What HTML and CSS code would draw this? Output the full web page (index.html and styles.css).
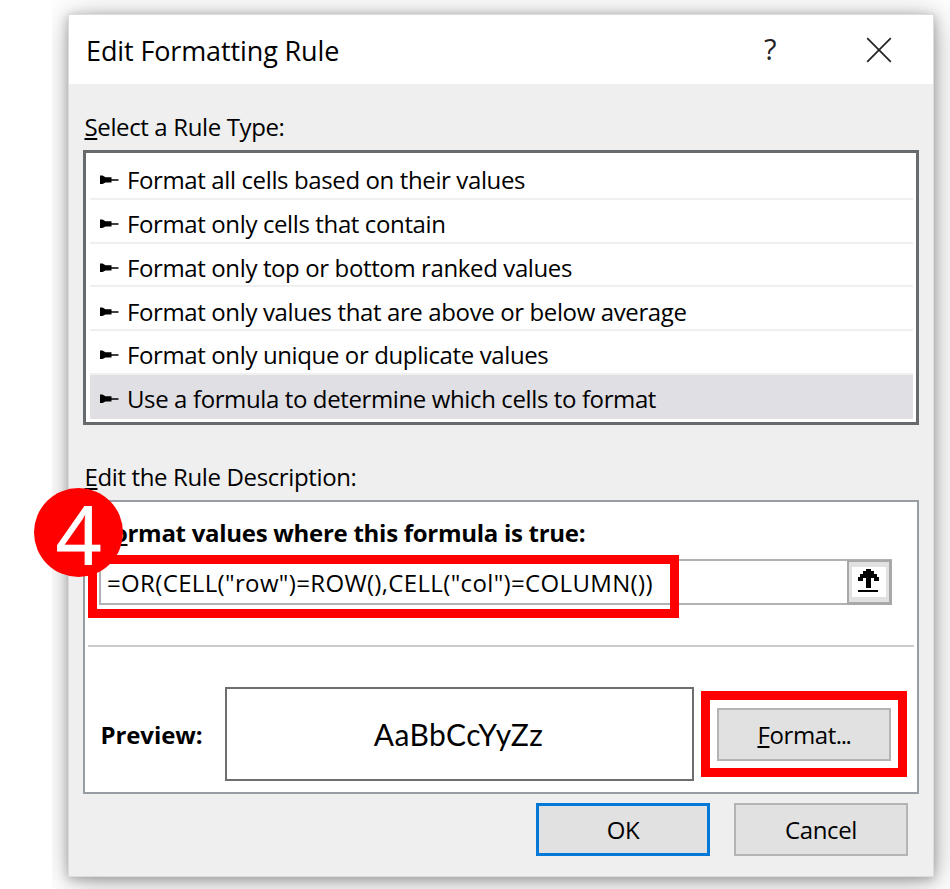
FILE: index.html
```
<!DOCTYPE html>
<html lang="en">
<head>
<meta charset="utf-8">
<title>Edit Formatting Rule</title>
<link rel="stylesheet" href="styles.css">
</head>
<body>
<svg class="defs" width="0" height="0"><symbol id="ptr" viewBox="0 0 19 10"><path d="M0 0.500h2.500L5.500 2.300h6V4.200H18.500v1.600h-7V7.400H5.500L2.500 9H0z" fill="#000"/></symbol></svg>
<div class="stage">
  <div class="dialog">
    <header class="titlebar">
      <h1 class="title"><span>Edit Formatting Rule</span></h1>
      <span class="help">?</span>
      <svg class="close" width="26" height="26" viewBox="0 0 26 26"><path d="M1.200 1.200L24.800 24.800M24.800 1.200L1.200 24.800" stroke="#222" stroke-width="1.700" fill="none"/></svg>
    </header>
    <main class="body">
      <p class="label label-type"><u>S</u>elect a Rule Type:</p>
      <ul class="rules">
        <li><svg><use href="#ptr"/></svg><span>Format all cells based on their values</span></li>
        <li><svg><use href="#ptr"/></svg><span>Format only cells that contain</span></li>
        <li><svg><use href="#ptr"/></svg><span>Format only top or bottom ranked values</span></li>
        <li><svg><use href="#ptr"/></svg><span>Format only values that are above or below average</span></li>
        <li><svg><use href="#ptr"/></svg><span>Format only unique or duplicate values</span></li>
        <li class="selected"><svg><use href="#ptr"/></svg><span>Use a formula to determine which cells to format</span></li>
      </ul>
      <p class="label label-desc"><u>E</u>dit the Rule Description:</p>
      <section class="panel">
        <h2 class="formula-title">F<u>o</u>rmat values where this formula is true:</h2>
        <div class="field">
          <span class="formula">=OR(CELL("row")=ROW(),CELL("col")=COLUMN())</span>
          <span class="collapse"><svg width="34" height="30" viewBox="0 0 34 30"><path fill="#fff" d="M0 0h34v30H0z"/><path d="M14 2h5v2h3v3h3v3h2v4h-5v-3h-3v10h-5V11h-3v3H6v-4h2V7h3V4h3zM6 23h20v2H6z" fill="#000"/></svg></span>
        </div>
        <hr>
        <div class="preview">
          <strong>Preview:</strong>
          <div class="sample"><span>AaBbCcYyZz</span></div>
          <button class="btn format"><span><u>F</u>ormat<span class="dots">...</span></span></button>
        </div>
      </section>
      <footer>
        <button class="btn ok"><span>OK</span></button>
        <button class="btn cancel"><span>Cancel</span></button>
      </footer>
    </main>
  </div>
</div>
<div class="mark mark-formula"></div>
<div class="mark mark-format"></div>
<div class="badge"><span>4</span></div>
</body>
</html>
```
FILE: styles.css
```
* { box-sizing: border-box; margin: 0; padding: 0; }
body { width: 950px; height: 889px; overflow: hidden; background: #fff; color: #000; font-family: "Open Sans", "Noto Sans", sans-serif; position: relative; }
.defs { position: absolute; }
.stage { margin-left: 52px; height: 889px; padding: 14px 16px 12px; overflow: hidden; }
.dialog { height: 863px; background: #efefef; border: 1px solid #dcdcdc; box-shadow: 0 2px 10px rgba(0,0,0,.26), 2px 4px 30px rgba(0,0,0,.3); }
.titlebar { height: 69px; background: #fff; display: flex; align-items: center; padding: 0 41px 0 17px; }
.title { flex: 1; font-size: 27px; font-weight: 400; line-height: 36px; letter-spacing: -.12px; white-space: nowrap; padding-top: 2px; }
.help { font-size: 29px; line-height: 36px; width: 14px; margin: -2px 88px 0 0; color: #222; }
.body { padding: 0 14px; }
.label { font-size: 24px; line-height: 32px; white-space: nowrap; letter-spacing: -.37px; padding-left: 1.5px; }
.label u, h2 u, .btn u { text-decoration-thickness: 2px; text-underline-offset: 2px; text-decoration-skip-ink: none; }
.label-type { margin-top: 27px; }
.rules { margin-top: 7px; height: 275px; border: 3px solid #676b6e; background: #fff; list-style: none; padding: 3px 3px 3px 4px; }
.rules li { height: 43.75px; display: flex; align-items: center; padding: 7px 0 0 10px; font-size: 24px; line-height: 32px; white-space: nowrap; letter-spacing: -.38px; border-bottom: 2px solid #f0f0f0; }
.rules li.selected { background: #e0dfe4; border-color: #e0dfe4; }
.rules svg { width: 19px; height: 10px; margin-right: 8px; }
.label-desc { margin-top: 36px; }
.panel { margin-top: 7px; height: 294px; border: 2px solid #979ca5; background: #fff; padding: 15px 3px 0; }
.formula-title { font-size: 24px; line-height: 32px; font-weight: 700; white-space: nowrap; letter-spacing: -.28px; padding-left: 12px; }
.field { margin: 10px 22px 0 11px; height: 46px; border: 2px solid #b2b2b6; display: flex; }
.formula { flex: 1; font-size: 24px; line-height: 44px; padding-left: 6px; white-space: nowrap; letter-spacing: .35px; }
.collapse { width: 45px; height: 45px; margin: -1px -2px 0 0; border: 2px solid #a8a8a8; border-right-width: 3px; border-bottom-width: 3px; background: #e1e1e1; display: flex; align-items: center; justify-content: center; }
hr { margin-top: 40px; border: 0; border-top: 2px solid #cbcbcb; }
.preview { display: flex; align-items: center; margin-top: 40px; padding-left: 12px; }
.preview strong { width: 125px; font-size: 24px; line-height: 32px; letter-spacing: -.1px; padding: 1px 0 0 .5px; }
.sample { width: 469px; height: 94px; border: 2px solid #6e6e6e; display: flex; align-items: center; justify-content: center; font-size: 30px; font-family: Lato, sans-serif; letter-spacing: .4px; padding: 0 2px 0 0; }
.btn { height: 53px; width: 174px; background: #e1e1e1; border: 2px solid #b4b4b4; font: 24px/32px "Open Sans", sans-serif; color: #000; letter-spacing: -.4px; }
.format { margin-left: 23px; padding-top: 2px; }
.dots { letter-spacing: -1.4px; }
footer { display: flex; justify-content: flex-end; gap: 24px; padding: 9px 11px 0 0; }
.ok { border: 3px solid #0078d7; }
.mark { position: absolute; border: 9px solid #f00; }
.mark-formula { left: 88px; top: 555px; width: 591px; height: 63px; }
.mark-format { left: 701px; top: 691px; width: 206px; height: 86px; }
.badge { position: absolute; left: 34px; top: 488px; width: 89px; height: 89px; border-radius: 50%; background: #f00; color: #fff; font-size: 80px; line-height: 89px; text-align: center; -webkit-text-stroke: .8px #fff; }
```
